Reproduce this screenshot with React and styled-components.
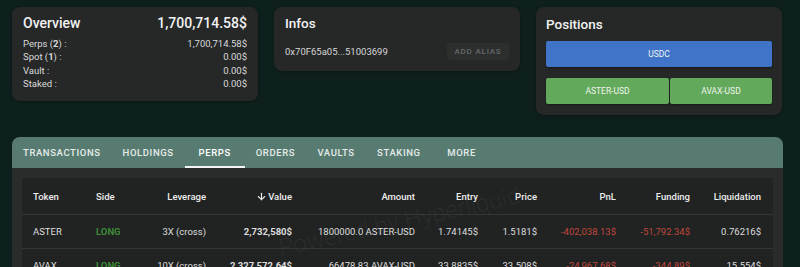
import React from 'react'
import styled, { createGlobalStyle } from 'styled-components'
import { ArrowDown } from 'lucide-react'

const Global = createGlobalStyle`
  html, body { margin: 0; padding: 0; background: #0e201d; }
  body { font-family: Roboto, "Liberation Sans", sans-serif; color: #e6e6e6; }
  * { box-sizing: border-box; }
`

const overview = [
  { label: 'Perps', count: 2, value: '1,700,714.58$' },
  { label: 'Spot', count: 1, value: '0.00$' },
  { label: 'Vault', value: '0.00$' },
  { label: 'Staked', value: '0.00$' },
]

const tabs = ['Transactions', 'Holdings', 'Perps', 'Orders', 'Vaults', 'Staking', 'More']

const columns = [
  { title: 'Token', align: 'left' },
  { title: 'Side', align: 'left' },
  { title: 'Leverage' },
  { title: 'Value', sort: true },
  { title: 'Amount' },
  { title: 'Entry' },
  { title: 'Price' },
  { title: 'PnL' },
  { title: 'Funding' },
  { title: 'Liquidation' },
]

const rows = [
  ['ASTER', 'LONG', '3X (cross)', '2,732,580$', '1800000.0 ASTER-USD', '1.74145$', '1.5181$', '-402,038.13$', '-51,792.34$', '0.76216$'],
  ['AVAX', 'LONG', '10X (cross)', '2,327,572.64$', '66478.83 AVAX-USD', '33.8835$', '33.508$', '-24,967.68$', '-344.89$', '15.554$'],
]

function App() {
  return (
    <Page>
      <Global />
      <TopRow>
        <Card $pad="6px 11px 10px">
          <TitleRow>
            <Title $size="14px">Overview</Title>
            <Title $size="14px">1,700,714.58$</Title>
          </TitleRow>
          <Lines>
            {overview.map((o) => (
              <Line key={o.label}>
                <span>
                  {o.label}
                  {o.count !== undefined && <> (<b>{o.count}</b>)</>} :
                </span>
                <span>{o.value}</span>
              </Line>
            ))}
          </Lines>
        </Card>

        <Card $pad="6px 11px 11px">
          <Title $size="13.5px">Infos</Title>
          <InfoRow>
            <span>0x70F65a05...51003699</span>
            <AliasButton>Add alias</AliasButton>
          </InfoRow>
        </Card>

        <Card $pad="7px 10px 11px">
          <Title $size="13.5px">Positions</Title>
          <Bars>
            <Bar $color="#3f74c9">USDC</Bar>
            <BarGroup>
              <Bar $color="#63a95b">ASTER-USD</Bar>
              <Bar $color="#63a95b">AVAX-USD</Bar>
            </BarGroup>
          </Bars>
        </Card>
      </TopRow>

      <Panel>
        <TabBar>
          {tabs.map((t) => (
            <Tab key={t} $active={t === 'Perps'}>{t}</Tab>
          ))}
        </TabBar>
        <PanelBody>
          <Table>
            <HeadRow>
              {columns.map((c) => (
                <HeadCell key={c.title} $align={c.align}>
                  {c.sort && <ArrowDown size={11} strokeWidth={2.4} />}
                  {c.title}
                </HeadCell>
              ))}
            </HeadRow>
            {rows.map((r) => (
              <BodyRow key={r[0]}>
                {r.map((v, i) => (
                  <Cell
                    key={i}
                    $align={columns[i].align}
                    $strong={i === 3}
                    $tone={i === 1 ? 'long' : i === 7 || i === 8 ? 'neg' : undefined}
                  >
                    {v}
                  </Cell>
                ))}
              </BodyRow>
            ))}
          </Table>
          <Watermark>Powered by Hyperliquid</Watermark>
        </PanelBody>
      </Panel>
    </Page>
  )
}

const Page = styled.div`
  width: 800px;
  height: 267px;
  overflow: hidden;
  padding: 7px 18px 0 12px;
`

const TopRow = styled.div`
  display: flex;
  align-items: flex-start;
  gap: 16px;
`

const Card = styled.div`
  width: 246px;
  background: #262828;
  border-radius: 8px;
  padding: ${(p) => p.$pad};
  box-shadow: 0 1px 3px rgba(0, 0, 0, 0.3);
`

const TitleRow = styled.div`
  display: flex;
  justify-content: space-between;
  align-items: center;
`

const Title = styled.div`
  font-size: ${(p) => p.$size};
  font-weight: 500;
  color: #f2f2f2;
  line-height: 20px;
`

const Lines = styled.div`
  margin-top: 4px;
  display: flex;
  flex-direction: column;
`

const Line = styled.div`
  display: flex;
  justify-content: space-between;
  font-size: 9.5px;
  line-height: 13.4px;
  color: #dadada;
  b { font-weight: 700; }
`

const InfoRow = styled.div`
  margin-top: 10px;
  display: flex;
  justify-content: space-between;
  align-items: center;
  font-size: 9.5px;
  color: #d6d6d6;
`

const AliasButton = styled.button`
  border: none;
  background: #2d2f2f;
  color: #666a6a;
  font-family: inherit;
  font-size: 8px;
  font-weight: 500;
  letter-spacing: 0.8px;
  text-transform: uppercase;
  width: 62px;
  height: 17px;
  border-radius: 3px;
  padding: 0;
`

const Bars = styled.div`
  margin-top: 7px;
  display: flex;
  flex-direction: column;
  gap: 11px;
`

const BarGroup = styled.div`
  display: flex;
  gap: 1px;
  & > * { flex: 1; }
  & > *:first-child { flex: 0 0 123px; }
`

const Bar = styled.div`
  height: 26px;
  background: ${(p) => p.$color};
  border-radius: 2px;
  display: flex;
  align-items: center;
  justify-content: center;
  font-size: 8.5px;
  color: #f0f5f0;
  box-shadow: 0 1px 2px rgba(0, 0, 0, 0.4);
`

const Panel = styled.div`
  margin-top: 22px;
  width: 771px;
  background: #2a2c2c;
  border-radius: 8px 8px 0 0;
  overflow: hidden;
`

const TabBar = styled.div`
  display: flex;
  height: 31px;
  background: #587b71;
`

const Tab = styled.div`
  position: relative;
  min-width: 60px;
  padding: 0 11px;
  display: flex;
  align-items: center;
  justify-content: center;
  font-size: 9.5px;
  font-weight: 500;
  letter-spacing: 0.6px;
  text-transform: uppercase;
  color: ${(p) => (p.$active ? '#ffffff' : '#e4ece9')};
  &::after {
    content: '';
    display: ${(p) => (p.$active ? 'block' : 'none')};
    position: absolute;
    left: 0;
    right: 0;
    bottom: 0;
    height: 2px;
    background: #f4f4f4;
  }
`

const PanelBody = styled.div`
  position: relative;
  padding: 10px 10px 0;
`

const Table = styled.div`
  background: #212323;
  padding: 0 11px;
`

const grid = `
  display: grid;
  grid-template-columns: 63px 50px 60px 86px 123px 63px 59px 79px 74px 71px;
  align-items: center;
  font-size: 9.5px;
`

const HeadRow = styled.div`
  ${grid}
  height: 37px;
  border-bottom: 1px solid #333535;
  margin: 0 -11px;
  padding: 0 11px;
`

const BodyRow = styled.div`
  ${grid}
  height: 34px;
  border-bottom: 1px solid #333535;
  margin: 0 -11px;
  padding: 0 11px;
`

const HeadCell = styled.div`
  display: flex;
  align-items: center;
  gap: 1px;
  justify-content: ${(p) => (p.$align === 'left' ? 'flex-start' : 'flex-end')};
  font-weight: 500;
  color: #ececec;
  white-space: nowrap;
`

const Cell = styled.div`
  text-align: ${(p) => (p.$align === 'left' ? 'left' : 'right')};
  white-space: nowrap;
  font-weight: ${(p) => (p.$strong || p.$tone === 'long' ? 700 : 400)};
  color: ${(p) => (p.$tone === 'long' ? '#3d8a36' : p.$tone === 'neg' ? '#c0463b' : '#dedede')};
`

const Watermark = styled.div`
  position: absolute;
  left: 270px;
  top: 66px;
  font-size: 24px;
  font-weight: 300;
  color: rgba(255, 255, 255, 0.06);
  transform: rotate(-12.5deg);
  transform-origin: left bottom;
  white-space: nowrap;
  pointer-events: none;
`

export default App
